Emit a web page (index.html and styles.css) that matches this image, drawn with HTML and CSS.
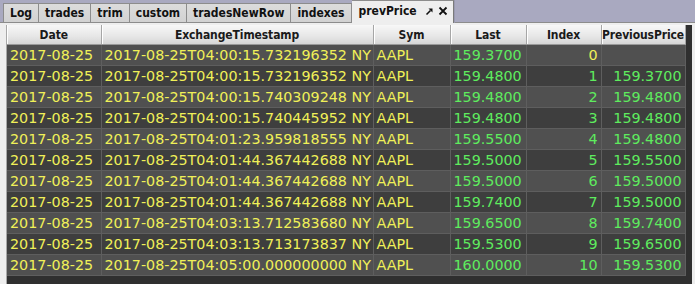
FILE: index.html
```html
<!DOCTYPE html>
<html>
<head>
<meta charset="utf-8">
<link rel="stylesheet" href="styles.css">
</head>
<body>
<div class="window">
  <div class="tabbar">
    <div class="tab">Log</div>
    <div class="tab">trades</div>
    <div class="tab">trim</div>
    <div class="tab">custom</div>
    <div class="tab">tradesNewRow</div>
    <div class="tab">indexes</div>
    <div class="tab active">prevPrice
      <span class="tab-icons">
        <svg class="ic" width="9" height="9" viewBox="0 0 9 9"><path d="M1.5 7.5 L5.5 3.5" stroke="#111" stroke-width="1.6" fill="none"/><path d="M3.5 1.5 H7.5 V5.5 Z" fill="#111"/></svg>
        <svg class="ic" width="10" height="10" viewBox="0 0 10 10"><path d="M1.5 1.5 L8.5 8.5 M8.5 1.5 L1.5 8.5" stroke="#111" stroke-width="1.8" fill="none"/></svg>
      </span>
    </div>
  </div>
  <div class="panel">
    <div class="viewport">
      <table class="grid">
        <colgroup>
          <col class="c-date"><col class="c-ts"><col class="c-sym"><col class="c-last"><col class="c-idx"><col class="c-prev">
        </colgroup>
        <thead>
          <tr><th>Date</th><th>ExchangeTimestamp</th><th>Sym</th><th>Last</th><th>Index</th><th>PreviousPrice</th></tr>
        </thead>
        <tbody>
          <tr><td class="y">2017-08-25</td><td class="y">2017-08-25T04:00:15.732196352 NY</td><td class="y">AAPL</td><td class="g">159.3700</td><td class="y r">0</td><td class="g r"></td></tr>
          <tr><td class="y">2017-08-25</td><td class="y">2017-08-25T04:00:15.732196352 NY</td><td class="y">AAPL</td><td class="g">159.4800</td><td class="g r">1</td><td class="g r">159.3700</td></tr>
          <tr><td class="y">2017-08-25</td><td class="y">2017-08-25T04:00:15.740309248 NY</td><td class="y">AAPL</td><td class="g">159.4800</td><td class="g r">2</td><td class="g r">159.4800</td></tr>
          <tr><td class="y">2017-08-25</td><td class="y">2017-08-25T04:00:15.740445952 NY</td><td class="y">AAPL</td><td class="g">159.4800</td><td class="g r">3</td><td class="g r">159.4800</td></tr>
          <tr><td class="y">2017-08-25</td><td class="y">2017-08-25T04:01:23.959818555 NY</td><td class="y">AAPL</td><td class="g">159.5500</td><td class="g r">4</td><td class="g r">159.4800</td></tr>
          <tr><td class="y">2017-08-25</td><td class="y">2017-08-25T04:01:44.367442688 NY</td><td class="y">AAPL</td><td class="g">159.5000</td><td class="g r">5</td><td class="g r">159.5500</td></tr>
          <tr><td class="y">2017-08-25</td><td class="y">2017-08-25T04:01:44.367442688 NY</td><td class="y">AAPL</td><td class="g">159.5000</td><td class="g r">6</td><td class="g r">159.5000</td></tr>
          <tr><td class="y">2017-08-25</td><td class="y">2017-08-25T04:01:44.367442688 NY</td><td class="y">AAPL</td><td class="g">159.7400</td><td class="g r">7</td><td class="g r">159.5000</td></tr>
          <tr><td class="y">2017-08-25</td><td class="y">2017-08-25T04:03:13.712583680 NY</td><td class="y">AAPL</td><td class="g">159.6500</td><td class="g r">8</td><td class="g r">159.7400</td></tr>
          <tr><td class="y">2017-08-25</td><td class="y">2017-08-25T04:03:13.713173837 NY</td><td class="y">AAPL</td><td class="g">159.5300</td><td class="g r">9</td><td class="g r">159.6500</td></tr>
          <tr><td class="y">2017-08-25</td><td class="y">2017-08-25T04:05:00.000000000 NY</td><td class="y">AAPL</td><td class="g">160.0000</td><td class="g r">10</td><td class="g r">159.5300</td></tr>
        </tbody>
      </table>
    </div>
  </div>
</div>
</body>
</html>
```

FILE: styles.css
```css
html, body {
  margin: 0;
  padding: 0;
  background: #a9a9c0;
}
.window {
  width: 695px;
  height: 284px;
  display: flex;
  flex-direction: column;
  overflow: hidden;
}
.tabbar {
  height: 22px;
  display: flex;
  align-items: flex-end;
  padding-left: 3px;
  flex: none;
}
.tab {
  height: 18px;
  line-height: 18px;
  padding: 0 6px;
  border: 1px solid #8c8c8c;
  border-bottom: none;
  border-left: none;
  background: linear-gradient(#dcdcdc, #d2d2d2);
  font-family: "DejaVu Sans Condensed", "DejaVu Sans", sans-serif;
  font-weight: bold;
  font-size: 12px;
  color: #111;
  white-space: nowrap;
}
.tab:first-child {
  border-left: 1px solid #8c8c8c;
}
.tab.active {
  height: 22px;
  line-height: 20px;
  margin-bottom: -1px;
  background: #eeeeee;
  border-right: 1px solid #7a7a7a;
  box-shadow: 1px 0 0 #9a9ab0;
  padding-left: 7px;
  padding-right: 5px;
  display: flex;
  align-items: flex-start;
  gap: 8px;
  position: relative;
  z-index: 1;
}
.tab-icons {
  display: flex;
  align-items: center;
  gap: 4px;
  height: 20px;
}
.ic {
  display: block;
}
.panel {
  flex: 1;
  background: #eeeeee;
  border-top: 1px solid #8c8c8c;
  padding: 2px 3px 0 6px;
  display: flex;
  min-height: 0;
}
.viewport {
  flex: 1;
  background: #2f2f2f;
  border-left: 1px solid #a8a8a8;
  overflow: hidden;
}
.grid {
  border-collapse: collapse;
  table-layout: fixed;
  width: 678px;
}
.c-date { width: 94px; }
.c-ts { width: 272px; }
.c-sym { width: 77px; }
.c-last { width: 76px; }
.c-idx { width: 75px; }
.c-prev { width: 84px; }
.grid th {
  height: 19px;
  padding: 0;
  background: linear-gradient(#f7f7f7, #e6e6e6 60%, #d6d6d6);
  border-right: 1px solid #a6a6a6;
  border-bottom: 1px solid #9a9a9a;
  box-shadow: inset 1px 0 0 #ffffff;
  font-family: "DejaVu Sans Condensed", "DejaVu Sans", sans-serif;
  font-weight: bold;
  font-size: 12px;
  letter-spacing: -0.1px;
  color: #1a1a1a;
  text-align: center;
  white-space: nowrap;
  overflow: hidden;
}
.grid td {
  height: 20px;
  padding: 0 3px;
  border-right: 1px solid #5e5e5e;
  border-bottom: 1px solid #5e5e5e;
  font-family: "DejaVu Sans", sans-serif;
  font-size: 14.3px;
  white-space: nowrap;
  overflow: hidden;
}
.grid tbody tr:nth-child(odd) td { background: #505050; }
.grid tbody tr:nth-child(even) td { background: #3e3e3e; }
.grid td.y { color: #f0f058; }
.grid td.g { color: #5eec5e; }
.grid td.r { text-align: right; }
```
